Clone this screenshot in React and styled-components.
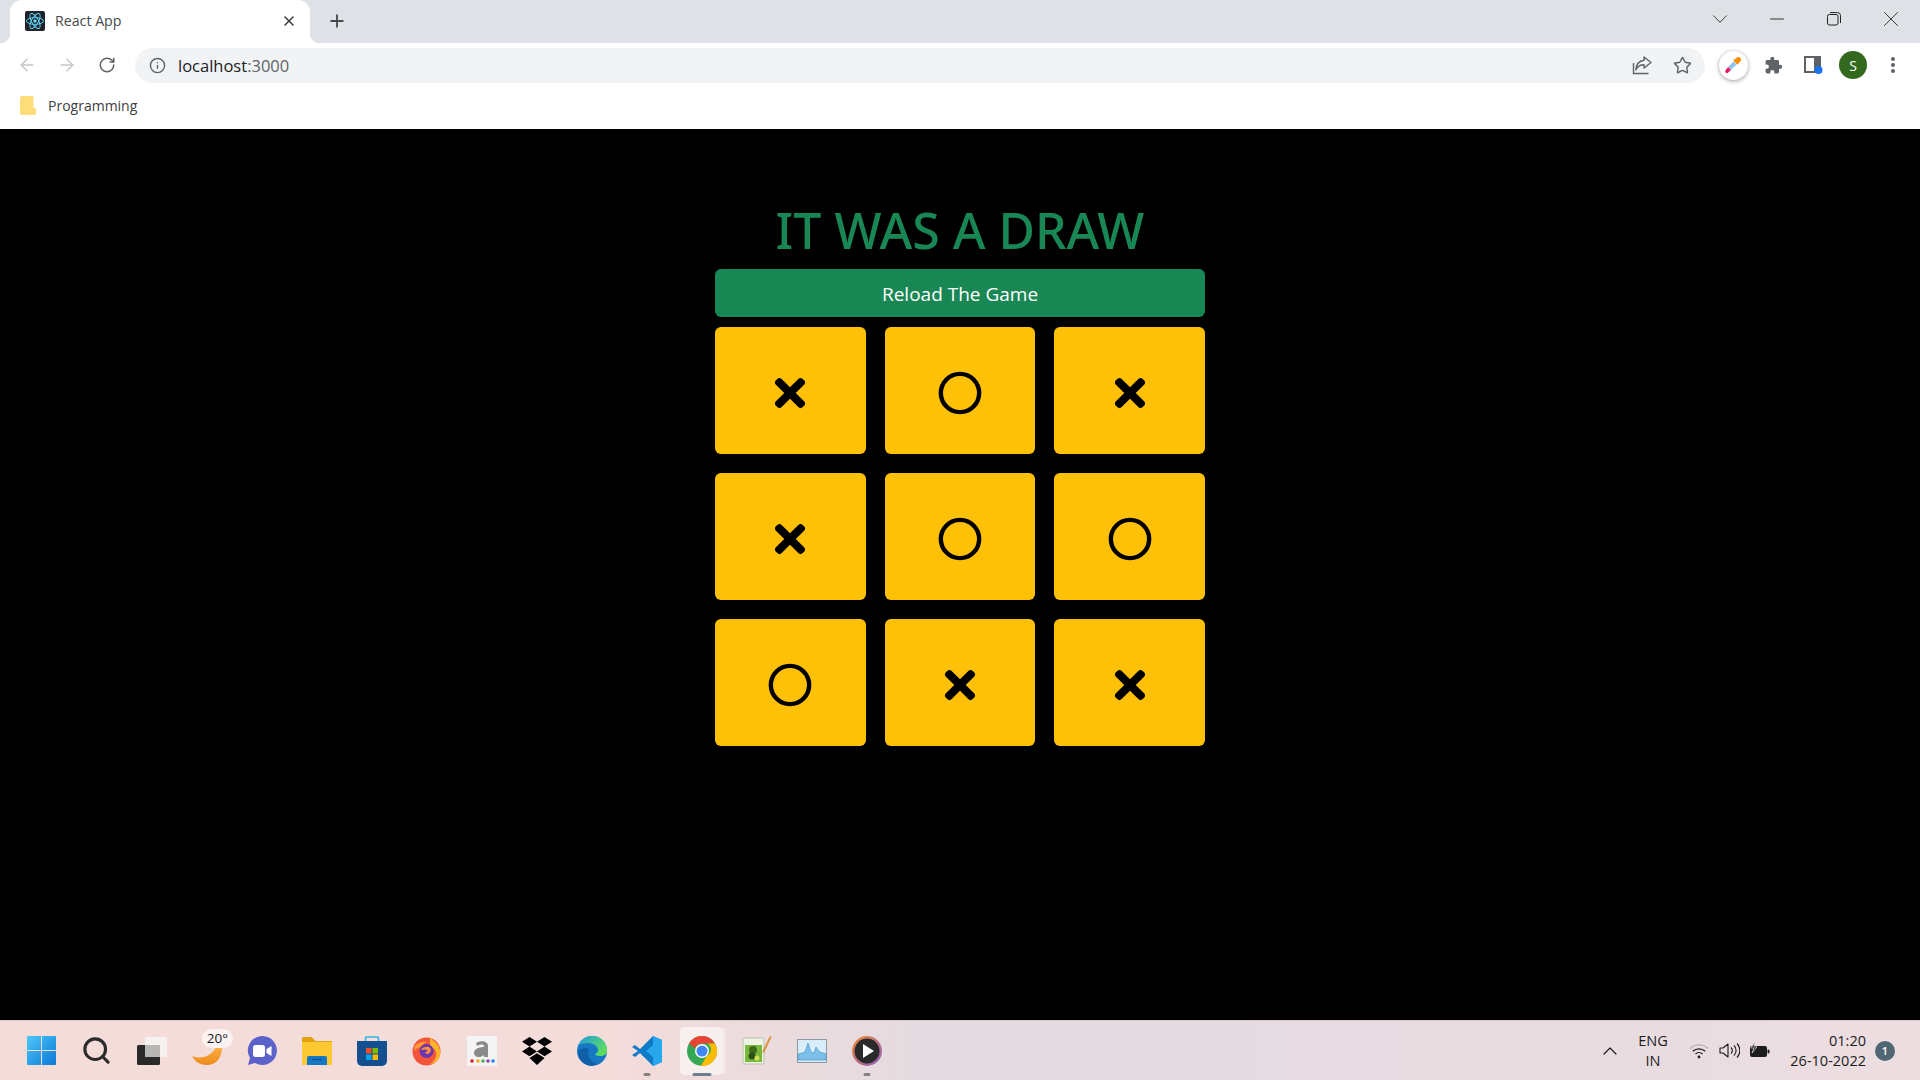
import React from 'react';
import styled, { createGlobalStyle } from 'styled-components';
import { FaTimes } from 'react-icons/fa';
import { FiCircle } from 'react-icons/fi';
import { ArrowLeft, ArrowRight, RotateCw, Info, Star, Plus, X, ChevronDown, ChevronUp, Minus, Search } from 'lucide-react';

const GlobalStyle = createGlobalStyle`
  html, body { margin: 0; padding: 0; background: #000; }
  body { font-family: "Open Sans", "Noto Sans", sans-serif; }
  * { box-sizing: border-box; }
`;

const Screen = styled.div`
  width: 1920px;
  height: 1080px;
  display: flex;
  flex-direction: column;
  overflow: hidden;
`;

/* browser chrome */
const TabStrip = styled.div`
  height: 43px;
  flex: none;
  background: #dee1e6;
  display: flex;
  align-items: flex-start;
  padding-left: 10px;
  padding-right: 1px;
`;
const Tab = styled.div`
  position: relative;
  width: 300px;
  height: 43px;
  background: #fff;
  border-radius: 12px 12px 0 0;
  display: flex;
  align-items: center;
  padding: 0 13px 2px 15px;
  gap: 10px;
  &::before, &::after {
    content: '';
    position: absolute;
    bottom: 0;
    width: 10px;
    height: 10px;
  }
  &::before { left: -10px; background: radial-gradient(circle at 0 0, #dee1e6 10px, #fff 10.5px); }
  &::after { right: -10px; background: radial-gradient(circle at 100% 0, #dee1e6 10px, #fff 10.5px); }
`;
const TabTitle = styled.span`
  flex: 1;
  font-size: 14.2px;
  color: #45494d;
`;
const NewTab = styled.div`
  width: 30px;
  height: 41px;
  margin-left: 12px;
  display: flex;
  align-items: center;
  justify-content: center;
  color: #45494d;
`;
const StripSpacer = styled.div`
  flex: 1;
`;
const WindowButton = styled.div`
  width: 57px;
  height: 37px;
  display: flex;
  align-items: center;
  justify-content: center;
  color: #222;
`;
const Toolbar = styled.div`
  height: 44px;
  flex: none;
  background: #fff;
  display: flex;
  align-items: center;
  padding: 0 7px;
`;
const ToolButton = styled.div`
  width: 40px;
  height: 36px;
  flex: none;
  display: flex;
  align-items: center;
  justify-content: center;
  color: ${(p) => p.$color || '#5f6368'};
`;
const Omnibox = styled.div`
  flex: 1;
  height: 35px;
  margin: 0 8px;
  border-radius: 18px;
  background: #f1f3f4;
  display: flex;
  align-items: center;
  padding: 0 3px 0 12px;
`;
const OmniIcon = styled.div`
  width: 20px;
  display: flex;
  justify-content: center;
  color: #5f6368;
`;
const Url = styled.div`
  flex: 1;
  margin-left: 11px;
  font-size: 16.5px;
  color: #202124;
  span { color: #5f6368; }
`;
const ExtensionBubble = styled.div`
  width: 29px;
  height: 29px;
  border-radius: 50%;
  background: #fff;
  box-shadow: 0 1px 4px rgba(0, 0, 0, 0.4);
  display: flex;
  align-items: center;
  justify-content: center;
`;
const Avatar = styled.div`
  width: 28px;
  height: 28px;
  border-radius: 50%;
  background: #33691e;
  color: #fff;
  font-size: 14px;
  display: flex;
  align-items: center;
  justify-content: center;
`;
const Bookmarks = styled.div`
  height: 42px;
  flex: none;
  background: #fff;
  display: flex;
  align-items: center;
  gap: 12px;
  padding: 0 0 5px 20px;
  font-size: 14px;
  color: #3c4043;
`;

/* game */
const Main = styled.main`
  flex: 1;
  background: #000;
  padding-top: 72px;
`;
const Game = styled.div`
  width: 490px;
  margin: 0 auto;
`;
const Title = styled.h1`
  margin: 0 0 10px;
  height: 58px;
  font-family: "Noto Sans", "Open Sans", sans-serif;
  font-size: 50px;
  line-height: 58px;
  font-weight: 500;
  text-align: center;
  color: #198754;
  white-space: nowrap;
`;
const ReloadButton = styled.button`
  display: block;
  width: 100%;
  height: 48px;
  margin-bottom: 10px;
  padding: 1px 0 0;
  border: 0;
  border-radius: 6px;
  background: #198754;
  color: #fff;
  font-family: inherit;
  font-size: 19px;
`;
const Board = styled.div`
  display: grid;
  grid-template-columns: repeat(3, 1fr);
  grid-auto-rows: 127px;
  gap: 19px;
`;
const Cell = styled.div`
  border-radius: 6px;
  background: #ffc107;
  color: #000;
  display: flex;
  align-items: center;
  justify-content: center;
  padding-top: 5px;
`;

/* taskbar */
const Taskbar = styled.footer`
  height: 60px;
  flex: none;
  display: flex;
  align-items: center;
  padding: 0 0 0 14px;
  border-top: 1px solid #dcc8c6;
  background: linear-gradient(90deg, #f4dcd9 0, #f4dcda 600px, #e2dbe1 960px, #e6dbe0 1400px, #ecdde0 1920px);
`;
const AppSlot = styled.div`
  position: relative;
  width: 55px;
  height: 48px;
  flex: none;
  display: flex;
  align-items: center;
  justify-content: center;
  ${(p) => p.$active && `
    border-radius: 5px;
    background: rgba(255, 255, 255, 0.55);
    box-shadow: 4px 0 0 -1px rgba(255, 255, 255, 0.35);
    width: 43px;
    margin: 0 6px;
  `}
`;
const RunDot = styled.span`
  position: absolute;
  bottom: -1px;
  left: 50%;
  width: ${(p) => (p.$active ? 19 : 7)}px;
  height: 3px;
  border-radius: 2px;
  transform: translateX(-50%);
  background: ${(p) => (p.$active ? '#6e7f8c' : '#85827f')};
`;
const WeatherBadge = styled.span`
  position: absolute;
  top: 2px;
  right: 1px;
  padding: 0 5px;
  border-radius: 10px;
  background: #faf3f1;
  font-size: 13.5px;
  line-height: 19px;
  color: #1b1b1b;
`;
const Tray = styled.div`
  margin-left: auto;
  display: flex;
  align-items: center;
  color: #1c1c1c;
`;
const Lang = styled.div`
  width: 50px;
  margin: 0 6px;
  font-size: 14.5px;
  line-height: 20px;
  text-align: center;
`;
const TrayIcon = styled.div`
  width: 30px;
  display: flex;
  justify-content: center;
`;
const Clock = styled.div`
  width: 92px;
  font-size: 14.5px;
  line-height: 20px;
  text-align: right;
  white-space: nowrap;
`;
const NotifyBadge = styled.div`
  width: 20px;
  height: 20px;
  margin: 0 25px 0 9px;
  border-radius: 50%;
  background: #506773;
  color: #fff;
  font-size: 11px;
  font-weight: 600;
  display: flex;
  align-items: center;
  justify-content: center;
`;

const ReactFavicon = () => (
  <svg width="20" height="20" viewBox="0 0 20 20">
    <rect width="20" height="20" rx="2" fill="#20232a" />
    <g fill="none" stroke="#61dafb" strokeWidth="0.9">
      <ellipse cx="10" cy="10" rx="8.5" ry="3.4" />
      <ellipse cx="10" cy="10" rx="8.5" ry="3.4" transform="rotate(60 10 10)" />
      <ellipse cx="10" cy="10" rx="8.5" ry="3.4" transform="rotate(120 10 10)" />
    </g>
    <circle cx="10" cy="10" r="1.7" fill="#61dafb" />
  </svg>
);
const RestoreIcon = () => (
  <svg width="14" height="14" viewBox="0 0 14 14" fill="none" stroke="#222" strokeWidth="1">
    <rect x="0.5" y="2.5" width="10.5" height="10.5" rx="2" />
    <path d="M3 .6h7.5a3 3 0 0 1 3 3V11" />
  </svg>
);
const ShareIcon = () => (
  <svg width="20" height="20" viewBox="0 0 20 20" fill="none" stroke="#5f6368" strokeWidth="1.4">
    <path d="M1.5 8v10.5h15" />
    <path d="M12 2l7 5.5-7 5.5V9.8C8 9.8 5.5 11 3.8 15 4.2 9.5 7.5 5.8 12 5.2z" strokeLinejoin="round" />
  </svg>
);
const Dropper = () => (
  <svg width="20" height="20" viewBox="0 0 20 20">
    <path d="M12.2 3.6l4.2 4.2-2 2-4.2-4.2z" fill="#fb8c00" />
    <circle cx="15.4" cy="4.6" r="2.6" fill="#fb8c00" />
    <path d="M10.5 6.6l2.9 2.9-5.4 5.4-2.9-2.9z" fill="#8cc4ee" />
    <path d="M5.1 12l2.9 2.9-2.7 2.6c-.8.7-2 .7-2.6 0-.7-.7-.7-1.8 0-2.6z" fill="#ec1b63" />
  </svg>
);
const PuzzleIcon = () => (
  <svg width="19" height="19" viewBox="0 0 24 24" fill="#5f6368">
    <path d="M20.5 11H19V7c0-1.1-.9-2-2-2h-4V3.5a2.5 2.5 0 0 0-5 0V5H4c-1.1 0-2 .9-2 2v3.8h1.5a2.7 2.7 0 0 1 0 5.4H2V20c0 1.1.9 2 2 2h3.8v-1.5a2.7 2.7 0 0 1 5.4 0V22H17c1.1 0 2-.9 2-2v-4h1.5a2.5 2.5 0 0 0 0-5z" />
  </svg>
);
const SidePanelIcon = () => (
  <svg width="20" height="20" viewBox="0 0 20 20">
    <path fillRule="evenodd" d="M1 1h17v17H1zM3 3v13h8V3z" fill="#5f6368" />
    <circle cx="15.5" cy="15" r="4" fill="#1a73e8" />
  </svg>
);
const MoreIcon = () => (
  <svg width="6" height="18" viewBox="0 0 6 18" fill="#5f6368">
    <circle cx="3" cy="3" r="2" />
    <circle cx="3" cy="9" r="2" />
    <circle cx="3" cy="15" r="2" />
  </svg>
);
const FolderIcon = () => (
  <svg width="16" height="19" viewBox="0 0 16 19">
    <path d="M2 0h10c1 0 1.5.5 1.5 1.5V12H16v5.5c0 .8-.6 1.5-1.5 1.5H2c-1 0-2-.8-2-2V2C0 .8 1 0 2 0z" fill="#fdd663" opacity="0.85" />
  </svg>
);

const WindowsLogo = () => (
  <svg width="29" height="29" viewBox="0 0 29 29">
    <defs>
      <linearGradient id="win" x1="0" y1="0" x2="1" y2="1">
        <stop offset="0" stopColor="#4fc8fb" />
        <stop offset="1" stopColor="#0a78d4" />
      </linearGradient>
    </defs>
    <path d="M1 0h13v14H0V1a1 1 0 0 1 1-1zM15 0h13a1 1 0 0 1 1 1v13H15zM0 15h14v14H1a1 1 0 0 1-1-1zM15 15h14v13a1 1 0 0 1-1 1H15z" fill="url(#win)" />
  </svg>
);
const TaskView = () => (
  <svg width="30" height="30" viewBox="0 0 30 30">
    <rect x="0" y="9" width="23" height="20" rx="1.5" fill="#2a2a2a" />
    <rect x="8" y="1" width="22" height="20" rx="1.5" fill="#f8f5f4" fillOpacity="0.85" />
    <rect x="8" y="9" width="15" height="12" fill="#b9b7b6" />
  </svg>
);
const WeatherMoon = () => (
  <svg width="30" height="30" viewBox="0 0 30 30">
    <defs>
      <linearGradient id="moon" x1="0" y1="0" x2="0" y2="1">
        <stop offset="0" stopColor="#fbb040" />
        <stop offset="1" stopColor="#ee8a1d" />
      </linearGradient>
    </defs>
    <path d="M0 20C6 23 19 22 24 11L30 11C30 22 24 29 15 29 8 29 3 26 0 20z" fill="url(#moon)" />
  </svg>
);
const MeetIcon = () => (
  <svg width="30" height="30" viewBox="0 0 30 30">
    <path d="M15.5 0a14.5 14.5 0 1 1-7.5 27L1 29l2-7A14.5 14.5 0 0 1 15.5 0z" fill="#5b62c9" />
    <rect x="6" y="9" width="12" height="12" rx="2.5" fill="#fff" />
    <path d="M19.5 13l5-3v10l-5-3z" fill="#fff" />
  </svg>
);
const ExplorerIcon = () => (
  <svg width="30" height="28" viewBox="0 0 30 28">
    <path d="M0 1.5C0 .7.7 0 1.5 0h8l4 4H30v5H0z" fill="#e2a40c" />
    <path d="M0 5h30v22a1 1 0 0 1-1 1H1a1 1 0 0 1-1-1z" fill="#fcc935" />
    <path d="M5 21a2 2 0 0 1 2-2h16a2 2 0 0 1 2 2v7H5z" fill="#1478c4" />
    <rect x="10" y="22" width="10" height="1.2" fill="#0b4f88" />
  </svg>
);
const StoreIcon = () => (
  <svg width="30" height="30" viewBox="0 0 30 30">
    <path d="M8.5 6V2.5c0-.8.6-1.5 1.5-1.5h10c.9 0 1.5.7 1.5 1.5V6" fill="none" stroke="#29b6e8" strokeWidth="1.6" />
    <path d="M0 5h30v20a5 5 0 0 1-5 5H5a5 5 0 0 1-5-5z" fill="#14508f" />
    <rect x="9" y="12" width="5.5" height="5.5" fill="#f25022" />
    <rect x="15.5" y="12" width="5.5" height="5.5" fill="#7fba00" />
    <rect x="9" y="18.5" width="5.5" height="5.5" fill="#00a4ef" />
    <rect x="15.5" y="18.5" width="5.5" height="5.5" fill="#ffb900" />
  </svg>
);
const FirefoxIcon = () => (
  <svg width="29" height="30" viewBox="0 0 29 30">
    <circle cx="14.5" cy="15.5" r="14" fill="#f4553a" />
    <path d="M18 0c1 4 5 5 8 9 3 5 3 11 0 15-3 3-6 4-8 4 5-3 7-8 6-12-1-3-4-5-6-6z" fill="#fdb42d" />
    <path d="M2 11c3-4 8-6 13-5-3 1-5 3-5 5-3 0-6 1-7 4z" fill="#ff9a36" />
    <circle cx="14.5" cy="15" r="7" fill="#6a35b0" />
    <path d="M9 14c1-3 5-4 8-3 3 2 2 6-1 7-2 0-3-1-3-2 2 0 3-1 2-2-2-1-4 0-6 0z" fill="#ff8f3a" />
  </svg>
);
const AmazonIcon = () => (
  <svg width="30" height="30" viewBox="0 0 30 30">
    <rect width="30" height="30" fill="#f4f4f4" />
    <path d="M9 7c5-3 12-2 12 3v11h-4v-2c-3 3-10 3-10-2 0-4 5-6 10-6v-1c0-2-4-2-7 0z" fill="#8a8a8a" />
    <circle cx="5" cy="25" r="1.8" fill="#e02020" />
    <circle cx="11" cy="25" r="1.8" fill="#f5a623" />
    <circle cx="16" cy="25" r="1.8" fill="#4caf50" />
    <circle cx="21" cy="25" r="1.8" fill="#8e44ad" />
    <circle cx="26" cy="25" r="1.8" fill="#2f80ed" />
  </svg>
);
const DropboxIcon = () => (
  <svg width="30" height="28" viewBox="0 0 30 28" fill="#000">
    <path d="M7.5 0L15 4.8 7.5 9.6 0 4.8zM22.5 0L30 4.8l-7.5 4.8L15 4.8zM0 14.4l7.5-4.8 7.5 4.8-7.5 4.8zM22.5 9.6l7.5 4.8-7.5 4.8-7.5-4.8zM7.5 21L15 16.2 22.5 21 15 28z" />
  </svg>
);
const EdgeIcon = () => (
  <svg width="30" height="30" viewBox="0 0 30 30">
    <defs>
      <linearGradient id="edgeTop" x1="0" y1="0" x2="1" y2="0.6">
        <stop offset="0" stopColor="#1b9de2" />
        <stop offset="1" stopColor="#5ede5e" />
      </linearGradient>
    </defs>
    <circle cx="15" cy="15" r="15" fill="#1677c5" />
    <path d="M1 10C4 3 10 0 15 0c9 0 15 6 15 15 0 3-3 5-7 5-3 0-5-1-5-2 2-1 3-2 3-4 0-4-5-7-10-7-4 0-8 1-10 3z" fill="url(#edgeTop)" />
    <path d="M12 13c-3 5 0 12 8 15-3 2-7 2-10 1C4 26 1 21 1 15c2-2 7-4 11-2z" fill="#0f5ea8" />
  </svg>
);
const VsCodeIcon = () => (
  <svg width="30" height="30" viewBox="0 0 30 30">
    <path d="M21 0l9 4v22l-9 4L8 17l-5 4-3-2 6-4-6-4 3-2 5 4z" fill="#0f7ac6" />
    <path d="M21 0l9 4v22l-9 4V21l-7-6 7-6z" fill="#27a7ee" />
  </svg>
);
const ChromeIcon = () => (
  <svg width="30" height="30" viewBox="0 0 30 30">
    <circle cx="15" cy="15" r="15" fill="#34a853" />
    <path d="M15 0a15 15 0 0 1 13 7.5H15a7.5 7.5 0 0 0-7 4.8L2 7.5A15 15 0 0 1 15 0z" fill="#ea4335" />
    <path d="M28 7.5A15 15 0 0 1 13.5 30l6.5-10a7.5 7.5 0 0 0 1-12.5z" fill="#fbbc04" />
    <circle cx="15" cy="15" r="7" fill="#fff" />
    <circle cx="15" cy="15" r="5.5" fill="#4285f4" />
  </svg>
);
const NotepadIcon = () => (
  <svg width="30" height="30" viewBox="0 0 30 30">
    <rect x="1" y="2" width="21" height="26" rx="1" fill="#eef3e4" stroke="#b9bfae" />
    <rect x="3" y="9" width="17" height="17" fill="#78b83a" />
    <circle cx="11" cy="14" r="4" fill="#3d6b1d" />
    <circle cx="10" cy="20" r="3.5" fill="#2f4f18" />
    <circle cx="15" cy="22" r="2.5" fill="#d4e157" />
    <path d="M28 0l1.5 1-7 15-2 1 .3-2.5z" fill="#d9923b" />
  </svg>
);
const MonitorIcon = () => (
  <svg width="30" height="24" viewBox="0 0 30 24">
    <rect x="0.5" y="0.5" width="29" height="23" fill="#d9edf9" stroke="#8e9aa3" />
    <path d="M1 21V15l4-1 3-1 3-9 3 9 3 1 2-6 2 3 2 2 6 2v6z" fill="#7cc0ea" stroke="#3d8fc6" strokeWidth="0.6" />
  </svg>
);
const PlayerIcon = () => (
  <svg width="30" height="30" viewBox="0 0 30 30">
    <defs>
      <linearGradient id="ring" x1="0" y1="0" x2="1" y2="1">
        <stop offset="0" stopColor="#f58a2e" />
        <stop offset="1" stopColor="#8a5cc7" />
      </linearGradient>
    </defs>
    <circle cx="15" cy="15" r="15" fill="url(#ring)" />
    <circle cx="15" cy="15" r="12.5" fill="#2a2a2c" />
    <path d="M11 8l11 7-11 7z" fill="#fff" />
  </svg>
);
const WifiIcon = () => (
  <svg width="20" height="16" viewBox="0 0 20 16" fill="none" stroke="#1c1c1c" strokeWidth="1.3">
    <path d="M1 5.5a13 13 0 0 1 18 0" stroke="#b9b0b2" />
    <path d="M3.8 8.3a9 9 0 0 1 12.4 0" />
    <path d="M6.5 11a5 5 0 0 1 7 0" />
    <circle cx="10" cy="14" r="1.4" fill="#1c1c1c" stroke="none" />
  </svg>
);
const SpeakerIcon = () => (
  <svg width="21" height="17" viewBox="0 0 21 17" fill="none" stroke="#1c1c1c" strokeWidth="1.1">
    <path d="M1 6v5h3l5 4V2L4 6z" strokeLinejoin="round" />
    <path d="M12 5.5a4 4 0 0 1 0 6M15 3.5a7 7 0 0 1 0 10M18 1.5a10 10 0 0 1 0 14" />
  </svg>
);
const BatteryIcon = () => (
  <svg width="21" height="17" viewBox="0 0 21 17">
    <rect x="1" y="4" width="17" height="11" rx="2" fill="#1c1c1c" />
    <rect x="18.5" y="7.5" width="2" height="4" rx="1" fill="#1c1c1c" />
    <path d="M6 0L2 6h3L3 11l5-6H5z" fill="#1c1c1c" stroke="#ebdde0" strokeWidth="0.7" />
  </svg>
);

const cells = ['x', 'o', 'x', 'x', 'o', 'o', 'o', 'x', 'x'];

const apps = [
  { id: 'start', icon: <WindowsLogo /> },
  { id: 'search', icon: <Search size={31} strokeWidth={2.4} color="#2b2b2b" /> },
  { id: 'tasks', icon: <TaskView /> },
  { id: 'weather', icon: <WeatherMoon />, badge: '20°' },
  { id: 'meet', icon: <MeetIcon /> },
  { id: 'files', icon: <ExplorerIcon /> },
  { id: 'store', icon: <StoreIcon /> },
  { id: 'firefox', icon: <FirefoxIcon /> },
  { id: 'amazon', icon: <AmazonIcon /> },
  { id: 'dropbox', icon: <DropboxIcon /> },
  { id: 'edge', icon: <EdgeIcon /> },
  { id: 'vscode', icon: <VsCodeIcon />, running: true },
  { id: 'chrome', icon: <ChromeIcon />, running: true, active: true },
  { id: 'notepad', icon: <NotepadIcon /> },
  { id: 'monitor', icon: <MonitorIcon /> },
  { id: 'player', icon: <PlayerIcon />, running: true },
];

const App = () => (
  <Screen>
    <GlobalStyle />
    <TabStrip>
      <Tab>
        <ReactFavicon />
        <TabTitle>React App</TabTitle>
        <X size={16} strokeWidth={2.4} color="#3c4043" />
      </Tab>
      <NewTab>
        <Plus size={20} strokeWidth={2.2} />
      </NewTab>
      <StripSpacer />
      <WindowButton><ChevronDown size={26} strokeWidth={0.8} /></WindowButton>
      <WindowButton><Minus size={22} strokeWidth={1} /></WindowButton>
      <WindowButton><RestoreIcon /></WindowButton>
      <WindowButton><X size={26} strokeWidth={0.8} /></WindowButton>
    </TabStrip>

    <Toolbar>
      <ToolButton $color="#c4c7ca"><ArrowLeft size={20} strokeWidth={1.8} /></ToolButton>
      <ToolButton $color="#c4c7ca"><ArrowRight size={20} strokeWidth={1.8} /></ToolButton>
      <ToolButton><RotateCw size={18} strokeWidth={2} /></ToolButton>
      <Omnibox>
        <OmniIcon><Info size={17} strokeWidth={2} /></OmniIcon>
        <Url>localhost<span>:3000</span></Url>
        <ToolButton><ShareIcon /></ToolButton>
        <ToolButton><Star size={19} strokeWidth={1.8} /></ToolButton>
      </Omnibox>
      <ToolButton><ExtensionBubble><Dropper /></ExtensionBubble></ToolButton>
      <ToolButton><PuzzleIcon /></ToolButton>
      <ToolButton><SidePanelIcon /></ToolButton>
      <ToolButton><Avatar>S</Avatar></ToolButton>
      <ToolButton><MoreIcon /></ToolButton>
    </Toolbar>

    <Bookmarks>
      <FolderIcon />
      Programming
    </Bookmarks>

    <Main>
      <Game>
        <Title>IT WAS A DRAW</Title>
        <ReloadButton>Reload The Game</ReloadButton>
        <Board>
          {cells.map((mark, i) => (
            <Cell key={i}>
              {mark === 'x' ? <FaTimes size={44} /> : <FiCircle size={46} strokeWidth={2.3} />}
            </Cell>
          ))}
        </Board>
      </Game>
    </Main>

    <Taskbar>
      {apps.map((app) => (
        <AppSlot key={app.id} $active={app.active}>
          {app.icon}
          {app.badge && <WeatherBadge>{app.badge}</WeatherBadge>}
          {app.running && <RunDot $active={app.active} />}
        </AppSlot>
      ))}
      <Tray>
        <ChevronUp size={24} strokeWidth={1.2} />
        <Lang>ENG<br />IN</Lang>
        <TrayIcon><WifiIcon /></TrayIcon>
        <TrayIcon><SpeakerIcon /></TrayIcon>
        <TrayIcon><BatteryIcon /></TrayIcon>
        <Clock>01:20<br />26-10-2022</Clock>
        <NotifyBadge>1</NotifyBadge>
      </Tray>
    </Taskbar>
  </Screen>
);

export default App;
